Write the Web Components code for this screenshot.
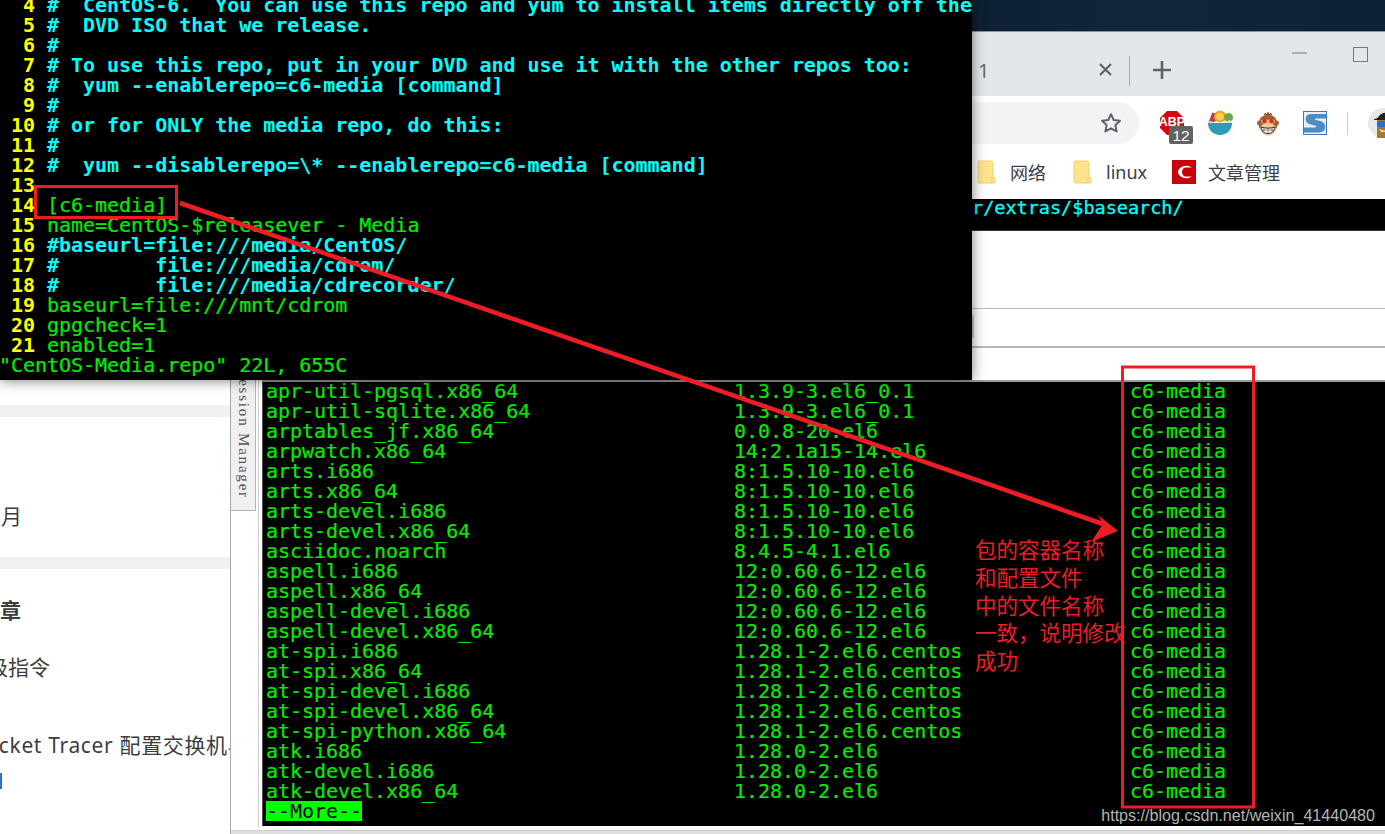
<!DOCTYPE html>
<html lang="zh-CN"><head><meta charset="utf-8"><title>CentOS-Media.repo</title>
<style>
html,body{margin:0;padding:0;background:#fff;overflow:hidden}
body{width:1385px;height:834px;font-family:"Liberation Sans",sans-serif}
</style></head><body>
<desktop-shot>
  <browser-window></browser-window>
  <blog-page></blog-page>
  <session-manager></session-manager>
  <vim-window></vim-window>
  <red-notes></red-notes>
</desktop-shot>
<script>
const def=(name,html)=>customElements.define(name,class extends HTMLElement{
  constructor(){super();this.attachShadow({mode:'open'}).innerHTML=typeof html==='function'?html():html;}
});
const esc=s=>s.replace(/&/g,'&amp;').replace(/</g,'&lt;');

def('desktop-shot',`<style>:host{display:block;position:relative;width:1385px;height:834px;overflow:hidden;background:#fff}</style><slot></slot>`);

/* ---------- vim window ---------- */
def('vim-window',()=>{
 const c='c',g='g';
 const rows=[
  [4,c,'#  CentOS-6.  You can use this repo and yum to install items directly off the'],
  [5,c,'#  DVD ISO that we release.'],
  [6,c,'#'],
  [7,c,'# To use this repo, put in your DVD and use it with the other repos too:'],
  [8,c,'#  yum --enablerepo=c6-media [command]'],
  [9,c,'#'],
  [10,c,'# or for ONLY the media repo, do this:'],
  [11,c,'#'],
  [12,c,'#  yum --disablerepo=\\* --enablerepo=c6-media [command]'],
  [13,g,''],
  [14,g,'[c6-media]'],
  [15,g,'name=CentOS-$releasever - Media'],
  [16,c,'#baseurl=file:///media/CentOS/'],
  [17,c,'#        file:///media/cdrom/'],
  [18,c,'#        file:///media/cdrecorder/'],
  [19,g,'baseurl=file:///mnt/cdrom'],
  [20,g,'gpgcheck=1'],
  [21,g,'enabled=1'],
 ];
 return `<style>
 :host{display:flex;flex-direction:column;justify-content:flex-end;position:absolute;left:0;top:0;width:972px;height:380px;box-sizing:border-box;padding-bottom:5px;background:#000;overflow:hidden;box-shadow:0 0 12px rgba(0,0,0,.55);font:20px/20px "DejaVu Sans Mono",monospace;letter-spacing:-.03px}
 .r{height:20px;white-space:pre;margin-left:-1px;flex:none}
 .n{color:#ff0;font-weight:700}
 .c{color:#0ff;font-weight:700}
 .g{color:#0e0;-webkit-text-stroke:.2px #0e0}
 </style>`+rows.map(([n,k,t])=>`<div class="r"><span class="n">${String(n).padStart(3,' ')} </span><span class="${k}">${esc(t)}</span></div>`).join('')
 +`<div class="r g">"CentOS-Media.repo" 22L, 655C</div>`;
});

/* ---------- browser behind ---------- */
def('browser-window',`<style>
 :host{display:flex;flex-direction:column;position:absolute;left:972px;top:0;width:413px;height:380px;background:#fff;overflow:hidden}
 .sky{height:31px;flex:none;background:linear-gradient(90deg,#0d2033,#10263c 40%,#0d2136);border-bottom:1px solid #8d959c}
 .tabs{height:64px;flex:none;background:#e4e7ea;position:relative}
 .tabs>*{position:absolute}
 .one{left:6px;top:29px;font:20px/20px "Noto Sans",sans-serif;color:#6b6b6b}
 .sep{left:157px;top:24px;width:1px;height:30px;background:#a9abad}
 .addr{height:64px;flex:none;display:flex;align-items:flex-start;padding-top:6px;box-sizing:border-box;position:relative}
 .pill{width:167px;height:42px;background:#f1f3f4;border-radius:0 21px 21px 0;position:relative;flex:none}
 .pill svg{position:absolute;right:17px;top:10px}
 .ext{display:flex;align-items:center;height:42px;margin-left:20px}
 .marks{height:39px;flex:none;display:flex;align-items:flex-start;font:18px/24px "Noto Sans CJK SC","Noto Sans",sans-serif;color:#3c4043;box-sizing:border-box}
 .marks svg{flex:none}
 .strip{height:32px;flex:none;background:#000;border-bottom:1px solid #333;box-sizing:border-box;color:#0ff;font:18.500px/17px "DejaVu Sans Mono",monospace;white-space:pre;overflow:hidden}
 .strip span{display:block;-webkit-text-stroke:.3px #0ff}
 .blank{flex:none;height:77px}
 .l1{height:1px;flex:none;background:#bbb}
 .mid{height:37px;flex:none;position:relative}
 .mid i{position:absolute;left:0;top:6px;width:2px;height:23px;background:#ccc}
 .l2{height:2px;flex:none;background:#b8b8b8}
 </style>
 <div class="sky"></div>
 <div class="tabs">
  <span class="one">1</span>
  <svg style="left:127px;top:31px" width="13" height="13" viewBox="0 0 13 13"><path d="M1 1l11 11M12 1L1 12" stroke="#5f6368" stroke-width="2.2"/></svg>
  <span class="sep"></span>
  <svg style="left:181px;top:29px" width="18" height="18" viewBox="0 0 18 18"><path d="M9 0v18M0 9h18" stroke="#5f6368" stroke-width="2.6"/></svg>
  <svg style="left:320px;top:20px" width="15" height="2" viewBox="0 0 15 2"><path d="M0 1h15" stroke="#77797b" stroke-width="1"/></svg>
  <svg style="left:381px;top:15px" width="15" height="15" viewBox="0 0 15 15"><rect x=".5" y=".5" width="14" height="14" fill="none" stroke="#77797b"/></svg>
 </div>
 <div class="addr">
  <div class="pill"><svg width="22" height="22" viewBox="0 0 22 22"><path d="M11 2.2l2.700 5.800 6.300.8-4.600 4.300 1.200 6.300L11 16.300 5.400 19.400l1.200-6.300L2 8.800l6.300-.8z" fill="none" stroke="#5f6368" stroke-width="2" stroke-linejoin="round"/></svg></div>
  <div class="ext">
   <svg width="36" height="42" viewBox="0 0 36 42" style="margin-right:12px;flex:none">
    <path d="M8 9h10l7 7v10l-7 7H8l-7-7V16z" fill="#d4090f"/>
    <text x="13" y="23.500" text-anchor="middle" font-family="Liberation Sans" font-weight="700" font-size="12.500" fill="#fff">ABP</text>
    <rect x="10" y="24" width="24" height="18" rx="2" fill="#636363"/>
    <text x="22" y="38.500" text-anchor="middle" font-family="Liberation Sans" font-size="15.500" fill="#fff">12</text>
   </svg>
   <svg width="26" height="26" viewBox="0 0 26 26" style="margin-right:24px;flex:none">
    <path d="M1 14L5 3c3-1 6 2 7 7z" fill="#b5404c"/><circle cx="13" cy="6.500" r="6" fill="#f3a61d"/><circle cx="13" cy="6.500" r="3.800" fill="#f8cf4a"/><circle cx="21.500" cy="7.500" r="4.500" fill="#6aa84a"/>
    <path d="M3 11l10 3 10-4 2 3H1z" fill="#e8e0c8"/>
    <path d="M1 13h24c0 7-5 12-12 12S1 20 1 13z" fill="#2c9cb9"/>
   </svg>
   <svg width="22" height="25" viewBox="0 0 22 25" style="margin-right:24px;flex:none">
    <path d="M7 4l1-2.500 1.500 1.500L11 .5l1.500 2.500L14 1.500 15 4z" fill="#8a4d26"/>
    <circle cx="2.500" cy="12" r="2.500" fill="#a9673a"/><circle cx="19.500" cy="12" r="2.500" fill="#a9673a"/>
    <circle cx="11" cy="13" r="9.500" fill="#a1602f"/>
    <ellipse cx="11" cy="18" rx="8" ry="6.500" fill="#e9cba2"/>
    <path d="M4 9.500c2-2 5-2 7-.5 2-1.500 5-1.500 7 .5 0 2.500-3 4-7 3.500-4 .5-7-1-7-3.500z" fill="#e3b98a"/>
    <circle cx="7.500" cy="10" r="2.200" fill="#e5231f"/><circle cx="14.500" cy="10" r="2.200" fill="#e5231f"/>
    <path d="M4 16c4 1.500 10 1.500 14 0-.7 4.500-3.500 6.500-7 6.500s-6.300-2-7-6.500z" fill="#fff" stroke="#3d2210"/>
    <path d="M7 16.700v5M11 17v5.500M15 16.700v5M4.600 19h12.800" stroke="#5a4030" stroke-width=".6"/>
   </svg>
   <svg width="24" height="24" viewBox="0 0 24 24" style="margin-right:20px;flex:none">
    <rect width="24" height="24" fill="#3d7ab5"/><rect x="1" y="1" width="22" height="22" fill="#e9eef3"/>
    <path d="M23 3H8C3 3 2 7 3 10s5 3.500 9 4.500c2 .5 1.500 2-.5 2H1v5h15c5 0 7-4 6-7.500s-5-4-9-5c-2-.5-1.500-1.500.5-1.500H23z" fill="#4a8cc5"/>
   </svg>
   <span style="width:1px;height:23px;background:#ccc;flex:none;margin-right:20px"></span>
   <svg width="30" height="30" viewBox="0 0 30 30" style="flex:none;overflow:visible">
    <circle cx="15" cy="15" r="15" fill="#e8e8e8"/>
    <path d="M6 11c2 0 4-1 5-3 2-3 6-4 8-3 3-1 7 0 11 3v4H6z" fill="#222"/>
    <path d="M9 12h21v18H9z" fill="#a9762e"/>
    <rect x="9" y="13" width="21" height="6" fill="#2f6fc4"/>
    <path d="M11 21c4 2 8 2 19 0v3H13z" fill="#e9d9a6"/>
   </svg>
  </div>
 </div>
 <div class="marks">
  <svg width="19" height="24" viewBox="0 0 19 24" style="margin-left:5px"><path d="M2 1h12c1.500 0 2 1 2 2v15h2v5H2c-1 0-1-1-1-1V2c0-1 1-1 1-1z" fill="#fde48c" stroke="#f3cf6a"/><path d="M14 23v-5h4" fill="none" stroke="#f3cf6a"/></svg>
  <span style="margin-left:14px;width:36px">网络</span>
  <svg width="19" height="24" viewBox="0 0 19 24" style="margin-left:27px"><path d="M2 1h12c1.500 0 2 1 2 2v15h2v5H2c-1 0-1-1-1-1V2c0-1 1-1 1-1z" fill="#fde48c" stroke="#f3cf6a"/><path d="M14 23v-5h4" fill="none" stroke="#f3cf6a"/></svg>
  <span style="margin-left:14px;width:41px;font-family:'Noto Sans',sans-serif;font-size:18px">linux</span>
  <svg width="24" height="24" viewBox="0 0 24 24" style="margin-left:25px"><rect width="24" height="24" fill="#c8000b"/><path d="M20 7.500c-3-2-7-2.300-10-.8-2.500 1.300-4 3.300-4 5.300s1.500 4 4 5.300c3 1.500 7 1.200 10-.8h-6c-2.500 0-4-2-4-4.500s1.500-4.500 4-4.500z" fill="#fff"/></svg>
  <span style="margin-left:12px">文章管理</span>
 </div>
 <div class="strip"><span>r/extras/$basearch/</span></div>
 <div class="blank"></div>
 <div class="l1"></div>
 <div class="mid"><i></i></div>
 <div class="l2"></div>
`);

/* ---------- blog page ---------- */
def('blog-page',`<style>
 :host{display:block;position:absolute;left:0;top:380px;width:231px;height:454px;background:#fff;overflow:hidden;font:21px/28px "Noto Sans CJK SC","Noto Sans",sans-serif;color:#3d3d3d}
 .band{height:12px;background:#f0f1f3}
 .t{white-space:nowrap;height:28px}
 </style>
 <div style="height:25px"></div><div class="band"></div>
 <div style="height:84px"></div>
 <div class="t" style="margin-left:1px">月</div>
 <div style="height:28px"></div><div class="band"></div>
 <div style="height:26px"></div>
 <div class="t" style="margin-left:0;font-weight:700">章</div>
 <div style="height:29px"></div>
 <div class="t" style="margin-left:-13px">级指令</div>
 <div style="height:51px"></div>
 <div class="t" style="margin-left:-27px;letter-spacing:.65px;font-family:'Noto Sans','Noto Sans CJK SC',sans-serif">Packet Tracer 配置交换机与</div>
 <div style="height:14px"></div>
 <div style="width:2px;height:16px;background:#2a72c8"></div>
`);

/* ---------- session manager + terminal ---------- */
def('session-manager',()=>{
 const d=`apr-util-pgsql.x86_64|1.3.9-3.el6_0.1
apr-util-sqlite.x86_64|1.3.9-3.el6_0.1
arptables_jf.x86_64|0.0.8-20.el6
arpwatch.x86_64|14:2.1a15-14.el6
arts.i686|8:1.5.10-10.el6
arts.x86_64|8:1.5.10-10.el6
arts-devel.i686|8:1.5.10-10.el6
arts-devel.x86_64|8:1.5.10-10.el6
asciidoc.noarch|8.4.5-4.1.el6
aspell.i686|12:0.60.6-12.el6
aspell.x86_64|12:0.60.6-12.el6
aspell-devel.i686|12:0.60.6-12.el6
aspell-devel.x86_64|12:0.60.6-12.el6
at-spi.i686|1.28.1-2.el6.centos
at-spi.x86_64|1.28.1-2.el6.centos
at-spi-devel.i686|1.28.1-2.el6.centos
at-spi-devel.x86_64|1.28.1-2.el6.centos
at-spi-python.x86_64|1.28.1-2.el6.centos
atk.i686|1.28.0-2.el6
atk-devel.i686|1.28.0-2.el6
atk-devel.x86_64|1.28.0-2.el6`.split('\n').map(l=>l.split('|'));
 return `<style>
 :host{display:block;position:absolute;left:230px;top:380px;width:1155px;height:454px;background:#fff;border-left:1px solid #a8a8a8;box-sizing:border-box}
 .wrap{display:flex;height:450px;}
 .tabcol{width:25px;flex:none}
 .tab{height:131px;box-sizing:border-box;background:#f0f0f0;border:solid #b4b4b4;border-width:0 1px 1px 0;overflow:hidden;position:relative}
 .tab span{display:block;writing-mode:vertical-rl;font:15px/25px "Liberation Serif",serif;letter-spacing:1.800px;color:#555;margin-top:-11px;white-space:nowrap;width:25px}
 .gap{width:2px;flex:none}
 .frame{flex:1;display:flex;border-left:1px solid #cfcfcf;padding-left:3px;box-sizing:border-box;height:448px}
 .term{flex:1;box-sizing:border-box;background:#000;border-left:1px solid #555;border-top:2px solid #9a9a9a;padding:0 0 0 3px;color:#0e0;-webkit-text-stroke:.2px #0e0;font:20px/20px "DejaVu Sans Mono",monospace;letter-spacing:-.03px;overflow:hidden;height:446px}
 .row{display:grid;grid-template-columns:468px 396px 1fr;height:20px;white-space:pre}
 .first{margin-top:-1px}
 .more{display:inline-block;background:#0f0;color:#000;-webkit-text-stroke:0;height:20px}
 .foot{height:4px;background:#dedede;border-top:1px solid #cfcfcf;box-sizing:border-box}
 </style>
 <div class="wrap">
  <div class="tabcol"><div class="tab"><span>Session Manager</span></div></div>
  <div class="gap"></div>
  <div class="frame"><div class="term">
   ${d.map((r,i)=>`<div class="row${i?'':' first'}"><span>${r[0]}</span><span>${r[1]}</span><span>c6-media</span></div>`).join('')}
   <div class="row"><span><span class="more">--More--</span></span></div>
  </div></div>
 </div>
 <div class="foot"></div>
 `;
});

/* ---------- red annotations, over everything ---------- */
def('red-notes',`<style>
 :host{display:block;position:absolute;left:0;top:0;width:1385px;height:834px;pointer-events:none}
 svg{position:absolute;left:0;top:0}
 .note{position:absolute;left:975px;top:535px;font:21.500px/27.800px "Noto Sans CJK SC",sans-serif;color:#ee1c25;white-space:nowrap}
 .mark{position:absolute;right:10px;top:805px;font:16.100px/20px "Liberation Sans",sans-serif;color:#b4b4b4;white-space:nowrap}
 </style>
 <svg width="1385" height="834" viewBox="0 0 1385 834">
  <rect x="35.500" y="186.500" width="141" height="31" fill="none" stroke="#ee1c25" stroke-width="3"/>
  <rect x="1122.500" y="367" width="131" height="440" fill="none" stroke="#ee1c25" stroke-width="3"/>
  <path d="M180 203L1103 524" stroke="#ee1c25" stroke-width="4.500" fill="none"/>
  <path d="M1118 531L1098 515L1103 524L1091 542z" fill="#ee1c25"/>
 </svg>
 <div class="note">包的容器名称<br>和配置文件<br>中的文件名称<br>一致，说明修改<br>成功</div>
 <div class="mark">https://blog.csdn.net/weixin_41440480</div>
`);
</script>
</body></html>
